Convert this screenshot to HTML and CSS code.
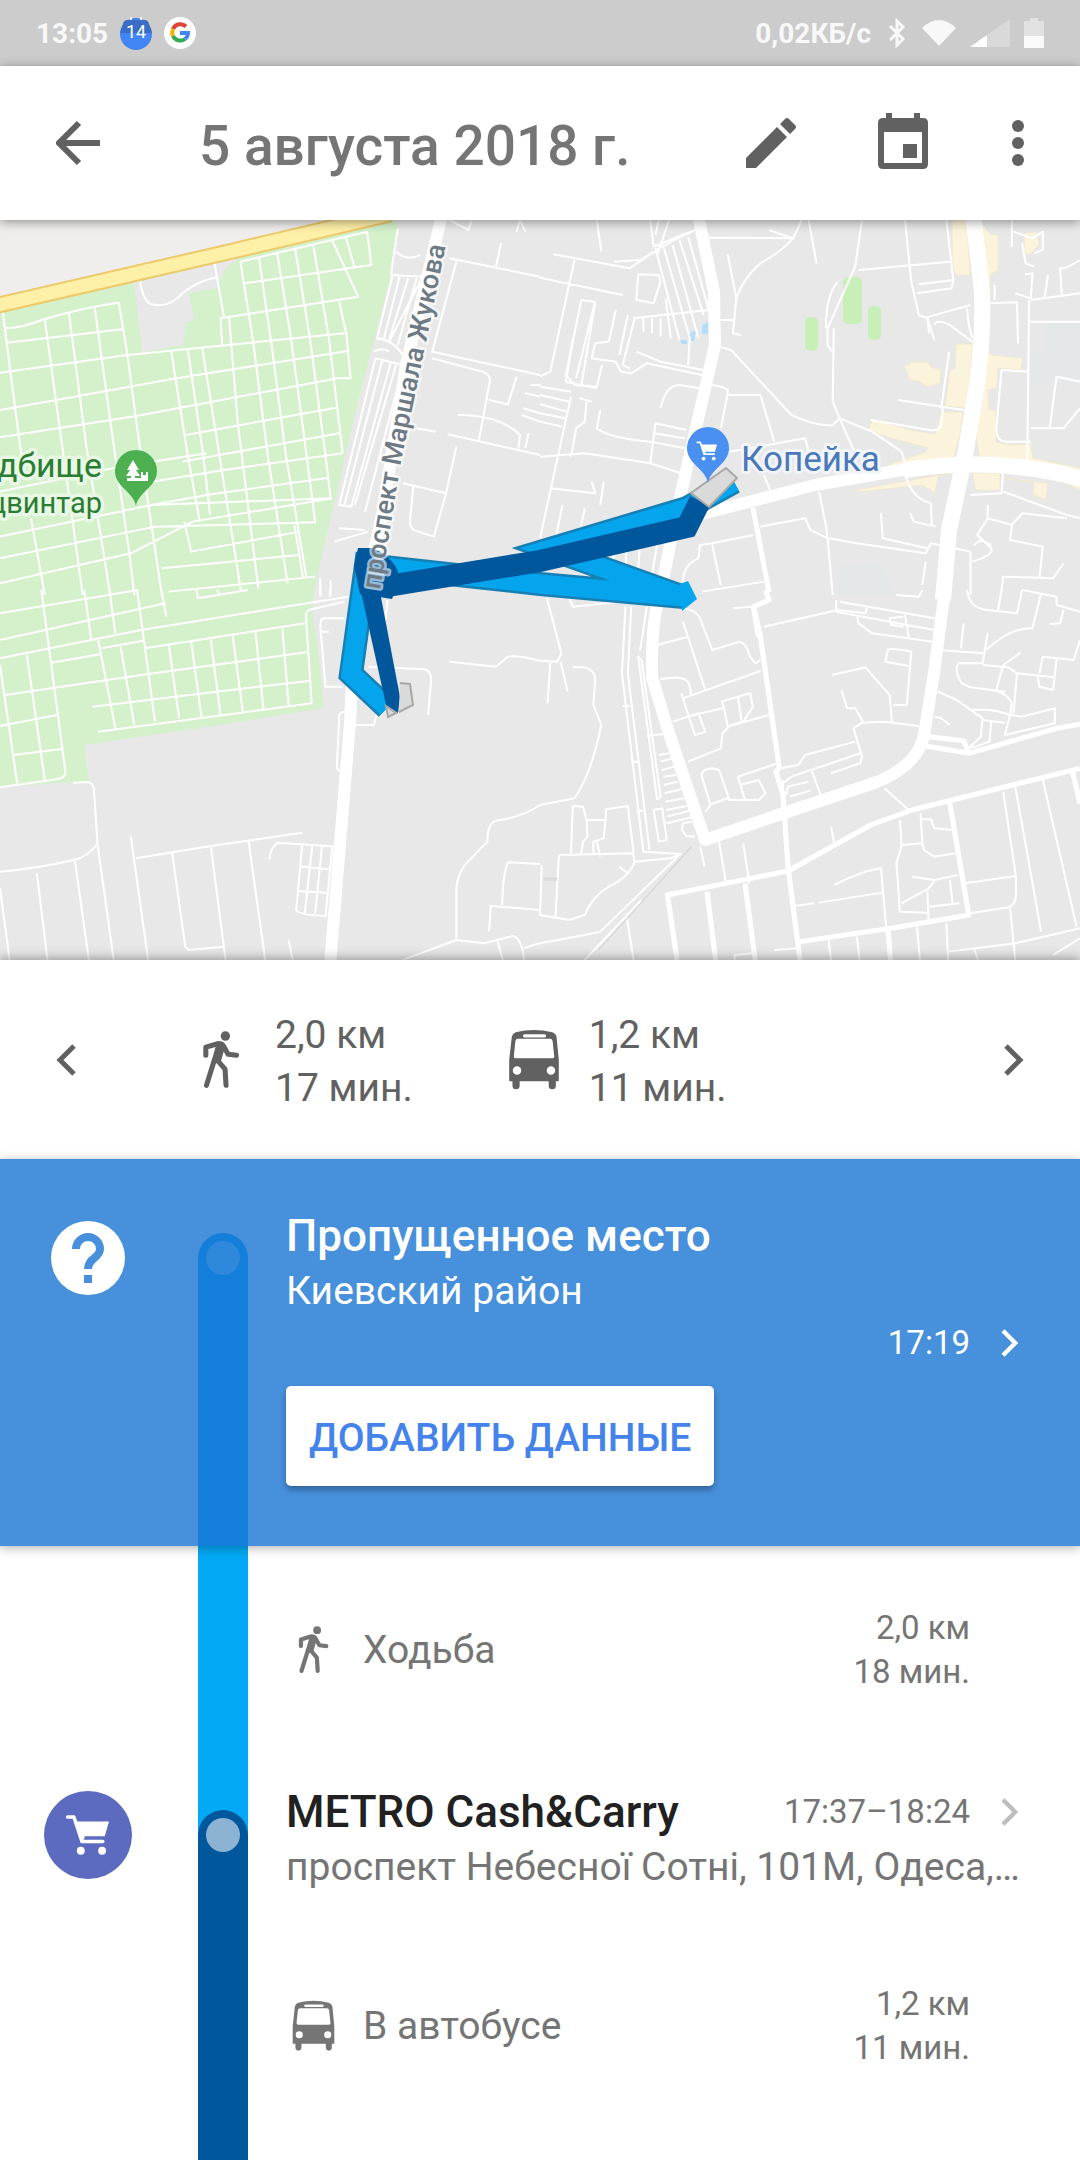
FILE: index.html
```html
<!DOCTYPE html>
<html lang="ru">
<head>
  <meta charset="UTF-8">
  <meta name="viewport" content="width=device-width, initial-scale=1">
  <title>Хронология</title>
  <link rel="stylesheet" href="styles.css">
</head>
<body>

<!-- Shared icons -->
<svg class="sprite" aria-hidden="true">
  <symbol id="walk" viewBox="0 0 110 172">
    <circle cx="68" cy="15" r="14" fill="currentColor"/>
    <g fill="none" stroke="currentColor" stroke-linecap="round" stroke-linejoin="round">
      <path stroke-width="15" d="M10 72V48L48 37M62 44L76 69L101 72M42 84L67 113L70 161M36 84L12 161"/>
      <path stroke-width="27" d="M54 44L43 82"/>
    </g>
  </symbol>
  <symbol id="bus" viewBox="0 0 164 190">
    <path fill="currentColor" fill-rule="evenodd" d="M6 160V95L14 24Q16 14 26 10Q82-4 138 10Q149 14 151 24L158 95V160H149V174Q149 185 138 185Q127 185 127 174V160H38V174Q38 185 27 185Q16 185 16 174V160ZM53 16Q48 16 48 21T53 26H114Q119 26 119 21T114 16ZM33 30Q26 30 25 37L20 84Q20 90 26 90H138Q145 90 144 84L139 37Q138 30 131 30ZM43 127A13 13 0 1 0 17 127A13 13 0 1 0 43 127ZM147 127A13 13 0 1 0 121 127A13 13 0 1 0 147 127Z"/>
  </symbol>
  <symbol id="cart" viewBox="0 0 136 128">
    <path fill="none" stroke="currentColor" stroke-width="11" stroke-linecap="round" stroke-linejoin="round" d="M6 9H25L50 84H113"/>
    <path fill="currentColor" d="M32 23H132L119 68H58L56 78H46Z"/>
    <circle cx="46" cy="112" r="12" fill="currentColor"/>
    <circle cx="111" cy="112" r="12" fill="currentColor"/>
  </symbol>
  <symbol id="right" viewBox="0 0 20 32">
    <path fill="none" stroke="currentColor" stroke-width="5" d="M2 2L16 16L2 30"/>
  </symbol>
</svg>

<div class="app">

  <!-- Status bar -->
  <div class="status">
    <span>13:05</span>
    <svg class="badge" viewBox="0 0 32 34">
      <circle cx="16" cy="18" r="16" fill="#4285f4"/>
      <path d="M3 8Q4 4 7 4H25Q28 4 29 8L32 17H0Z" fill="#3b6dc4"/>
      <path d="M11 1V4M21 1V4" stroke="#eee" stroke-width="2"/>
      <text class="badge-text" x="16" y="22">14</text>
    </svg>
    <svg class="badge" viewBox="0 0 32 34">
      <circle cx="16" cy="17" r="16" fill="#fff"/>
      <g fill="none" stroke-width="4">
        <path stroke="#db4437" d="M22 10.500A8 8 0 0 0 9 13"/>
        <path stroke="#f4b400" d="M9 13A8 8 0 0 0 9 20"/>
        <path stroke="#34a853" d="M9 20A8 8 0 0 0 21 23"/>
        <path stroke="#4285f4" d="M21 23A8 8 0 0 0 24 17H16"/>
      </g>
    </svg>
    <span class="speed">0,02КБ/с</span>
    <svg class="bluetooth" viewBox="0 0 18 30"><path d="M2 8L15 21L9 27V3L15 9L2 22" fill="none" stroke="currentColor" stroke-width="3"/></svg>
    <svg class="wifi" viewBox="0 0 34 26"><path d="M0 8Q17-8 34 8L17 26Z" fill="currentColor"/></svg>
    <svg class="signal" viewBox="0 0 40 28"><path d="M0 28L40 0V28Z" fill="#d9d9d9"/><path d="M0 28L17 16V28Z" fill="#fff"/></svg>
    <svg class="battery" viewBox="0 0 20 30"><path d="M0 3H6V0H14V3H20V30H0Z" fill="#e2e2e2"/><path d="M0 18H20V30H0Z" fill="#fafafa"/></svg>
  </div>

  <!-- App bar -->
  <header class="bar">
    <button class="icon-button" aria-label="Назад">
      <svg class="back" viewBox="0 0 44 46"><path d="M44 23H5M23 3L3 23L23 43" fill="none" stroke="currentColor" stroke-width="6"/></svg>
    </button>
    <h1>5 августа 2018 г.</h1>
    <button class="icon-button" aria-label="Изменить">
      <svg class="pencil" viewBox="0 0 50 50"><path d="M0 40L31 9L41 19L10 50H0ZM34 6L39 1Q41-1 43 1L49 7Q51 9 49 11L44 16Z" fill="currentColor"/></svg>
    </button>
    <button class="icon-button" aria-label="Календарь">
      <svg class="calendar" viewBox="0 0 50 56"><path fill="currentColor" fill-rule="evenodd" d="M8 0H14V5H36V0H42V5H45Q50 5 50 10V51Q50 56 45 56H5Q0 56 0 51V10Q0 5 5 5H8ZM6 19V50H44V19ZM25 31H39V45H25Z"/></svg>
    </button>
    <button class="icon-button" aria-label="Ещё">
      <svg class="more" viewBox="0 0 12 46"><circle cx="6" cy="6" r="6" fill="currentColor"/><circle cx="6" cy="23" r="6" fill="currentColor"/><circle cx="6" cy="40" r="6" fill="currentColor"/></svg>
    </button>
  </header>

  <!-- Map -->
  <div class="map">
    <svg class="map-canvas" viewBox="0 0 1080 740" role="img" aria-label="Карта маршрута">
      <defs>
        <path id="zhukova" d="M380 370L401 242L424 132L450 5"/>
      </defs>

      <!-- Land -->
      <path class="suburb" d="M0 0H380L220 34L0 84Z"/>
      <path class="park" d="M0 84L220 34L380 0H394L398 8L389 62L358 182L315 365L312 390L318 430L324 488L200 508L84 525L89 562H71L0 567Z"/>
      <path class="land" d="M134 63L142 132L183 125L186 102L194 100L189 73L217 68L226 48L240 37L215 42Z"/>
      <g class="field">
        <rect x="843" y="57" width="19" height="47" rx="5"/>
        <rect x="805" y="97" width="13" height="34" rx="5"/>
        <rect x="868" y="86" width="13" height="34" rx="5"/>
      </g>
      <path class="water" d="M702 105L708 102V114H702ZM690 113L696 110L694 121H689ZM680 120H687V124H682Z"/>
      <path class="tint" d="M1045 102H1080V165H1027V132L1045 130ZM840 345L882 342L895 375H838Z"/>
      <path class="shops" d="M952 0H967L970 55H955L952 40ZM980 0L990 14L998 15V50L990 55V75L986 73L982 30ZM1024 13L1037 12L1039 25L1030 35L1024 33ZM956 124H973L967 188L945 186L950 150L955 148ZM904 146L912 142H928L931 147L941 150L940 163L928 167L920 162L910 160ZM986 126L991 135L1023 138L1021 150L998 148L997 168L988 170L989 190H996V222L1010 225L1031 224L1033 238L1080 248V270L1040 252L980 241L976 215ZM941 192H963L960 215L951 249L880 248L925 232L928 228L890 218L868 210L873 199L910 210L935 214ZM856 270L950 253L938 257L935 273L922 265L860 272ZM973 253H1000V270H975ZM1000 258L1048 263L1046 280L1033 275L1034 263Z"/>

      <!-- Side streets, north-west -->
      <g class="street" transform="translate(0 -5) scale(.3444 .3333)">
        <path d="M8 290L30 470L62 720M15 340Q60 340 130 312Q250 275 345 263L370 420L405 690M20 383L355 343M130 312L180 690L215 950L240 1140M200 293L250 690L300 1010L320 1140M275 278L330 690L375 1010L390 1140M0 473L370 420L1000 355M0 585L180 552L500 492L1010 408M0 667L400 602L980 490L1018 490L1005 350M405 690L470 1140M0 830L350 755L600 715M0 965L440 870L960 850M0 1030L450 935L918 922M0 1105L380 1015L560 920L965 850"/>
        <path d="M405 190Q415 260 440 268Q490 280 530 235Q570 200 628 187M622 140L650 305M698 140L1066 50L1078 150L710 205M698 140L735 380L780 740L835 1105M752 128L790 400L830 720L890 1090M805 115L845 370L890 720L915 920M857 102L900 370L945 720L960 850M910 92L955 370L995 715M965 78L1040 245L640 310L645 390M1005 68L1030 160M985 260L1005 355M665 305L690 620L750 1120M497 408L545 720L580 920M545 402L590 720L610 900M587 398L640 740L700 1130M540 660L975 578M530 740L985 655M440 800L650 765L995 715M440 870L600 840L955 788M535 920L555 1010L870 950M470 1060L868 1020M490 1130L915 1085M855 930L880 1090"/>
        <path d="M90 910L130 1140M1155 40L1135 180L1225 185M1150 110Q1180 140 1220 120M1140 180L1095 370L1130 380L1225 190M1160 185L1115 370M1185 190L1130 375M1210 190L1155 390M1085 410Q1110 395 1130 410M1090 430L985 870L1020 875L1135 440M1110 435L1000 870M1150 450L1030 870M1170 455L1060 890M1090 430L1170 450M1100 370Q1150 380 1175 430M985 940L1060 945M970 980L1070 950"/>
        <path d="M1305 15L1360 45L1370 15M1305 130L1568 185M1455 85L1440 155M1325 140L1255 410L1568 480M1255 430L1400 470Q1430 480 1420 510L1390 680M1420 555L1475 568L1500 485M1330 600Q1450 600 1510 660L1505 700M1210 640L1265 650M1300 658L1568 720M1325 695L1295 835L1170 805M1200 815L1190 920Q1190 945 1215 950L1260 965L1295 835M1500 50L1510 15L1525 50M1520 580L1568 595M1525 535L1568 545M1535 655L1525 700M1570 510H1540M1515 600L1568 620M930 1090V1140M960 1095V1140"/>
      </g>

      <!-- Side streets, north-east -->
      <g class="street" transform="translate(540 -5) scale(.3444 .3333)">
        <path d="M165 15L178 110M320 15L330 95L450 45M345 15L335 60M375 15L340 120M215 140L290 135L390 75L450 45M40 118L260 160L360 90M100 135L30 470L0 485M0 188L240 240M285 178L345 180L350 200L330 265L280 255ZM335 100L405 375M360 100L435 370M385 90L460 370M405 75L475 300M430 65L500 320M365 250L380 370M490 68L735 70L760 15M665 45L735 70Q700 110 640 145Q590 190 570 250L560 355L585 360M545 118L570 250M780 15L803 145M935 15L915 155L835 340L835 390L848 410M865 200Q830 240 830 340M925 165L1190 140M1060 15L1078 200L1100 300L1120 308L1250 270M1100 208L1200 195L1195 220L1095 235M1180 15L1200 195M1130 355L1125 310L1145 375M1145 330Q1150 310 1190 330L1255 380"/>
        <path d="M1370 15V95M1375 50L1430 70L1460 50V105L1435 115M1400 85L1410 145L1435 155M1408 178L1430 175L1425 250L1380 235M1475 180L1465 250M1568 135Q1520 165 1510 160L1515 240M1295 265L1385 262L1388 385M1320 210V255M1425 255L1568 235M1420 255L1415 740M1420 320H1568M1340 465L1420 470M1340 465L1325 640Q1325 680 1355 680H1425M1500 485L1568 500M1500 485L1480 640M1568 580L1520 640H1425M1240 280L1245 330L1255 370"/>
        <path d="M520 315H560M520 395L555 405L730 600Q800 635 850 630L870 610L850 560L853 340M870 610L965 650L1050 710L1060 745M870 610L910 705M1188 410L1165 580M1040 555L1230 585M1170 580L1165 630Q1160 650 1130 645L960 615M545 520V540L640 540L680 680M495 510Q550 515 545 535L525 640M550 710L770 670L780 710M650 780L670 830M120 255L75 480L100 510L165 515L180 450M160 265L120 510M120 255L160 260L105 490M220 285L200 380L160 385L150 430L220 440L235 470L265 475L310 445L470 480M255 300L230 420M275 310L240 450L262 460M270 310L490 285M300 310V350M325 310V355M350 310V365M280 410L350 440L475 465M435 370L430 450M350 580Q365 510 405 510L465 520"/>
        <path d="M95 375L75 500L165 520M0 515L90 530M0 540L85 560M0 568L80 590M0 595L75 610M0 620L65 635M90 545L0 970M115 550L150 560M135 560L130 620L105 640L90 725M175 585L165 640Q200 670 320 680L420 700M335 625L425 645M330 655L420 670M335 625L320 745L410 775M0 725L130 715L320 745M150 800L160 835L30 820M185 800L175 870M65 870L30 1050M130 880L105 1000M220 1010L180 1100M250 1000V1110M290 990L280 1140M345 960L320 1110"/>
        <path d="M640 935L770 910L785 945L835 970L830 930L810 830M835 970L850 1140M620 960L500 985L465 990L460 1030Q415 1050 415 1100M500 990L525 1110M470 1130L650 1100M840 970L920 985L1120 1015L1135 985L1250 1010V1140M1075 895L1085 920L1150 935M990 895L995 970L1125 1000M1060 780Q1080 850 1135 865L1138 930M1120 1040L1110 1110M1250 840L1340 835L1345 770M1345 830L1530 900L1568 910M1300 870V910L1370 930L1400 895L1530 910M1300 910L1270 960L1310 1000Q1320 1020 1255 1040M1370 930L1365 975L1460 995L1450 1090M1340 1130L1345 1085L1490 1090L1520 1045M1260 990L1280 975L1310 990"/>
      </g>

      <!-- Side streets, south-west -->
      <g class="street" transform="translate(0 370) scale(.3444 .3333)">
        <path d="M0 70L400 0M0 150L480 40M0 205L410 120L1010 20M15 315L410 255L890 187M0 408L165 375M268 350L900 272M285 425L905 340M40 495L180 477M0 592L165 568Q195 560 190 545L120 0M78 195L130 570M0 225L50 580M150 218L290 193M295 175L415 152M245 0L265 150M285 150L335 415M318 0L335 130M350 170L390 405M398 0L450 395M468 0L483 80M420 175L885 100M490 165L520 385M555 155L585 380M612 148L640 375M675 135L705 365M742 128L765 358M820 115L838 345M570 0L575 25L720 0M630 0L640 15"/>
        <path d="M212 578L255 576Q272 580 273 600L283 760L330 1110M0 845Q110 835 215 810Q255 800 283 762M0 895L28 1110M107 850L138 1110M218 815L258 1110M380 740L430 1110M395 805L612 768L878 728M500 790L538 1070L548 1080L650 1070M612 768L655 1110M722 755L770 1110M838 1050L850 1110M782 808Q785 770 808 758L980 770M878 760L860 960Q865 975 950 978M907 765L885 970M935 768L915 970M965 770L945 980M875 830L955 838M868 903L950 908"/>
        <path d="M905 340L888 75Q890 60 905 58L1000 35M930 0V20M958 0V20M1000 85H940Q930 85 930 110L945 290H995M935 125H955M1000 365Q985 365 985 380L978 535L995 550M1030 405H1085L1095 370M1070 230L1235 238Q1253 245 1252 270L1243 375M1125 30L1120 90M1305 215L1440 230L1475 200Q1500 195 1568 212M1568 645Q1520 680 1440 692Q1415 700 1415 755L1345 830Q1325 870 1325 900V1050M1170 1110L1325 1050L1405 1060L1490 1038Q1515 1045 1522 1110M1445 1055L1460 1110M1520 1075L1568 1060M1568 822L1475 817Q1460 850 1458 945M1568 960L1425 948L1420 1025"/>
      </g>

      <!-- Side streets, south-east -->
      <g class="street" transform="translate(540 370) scale(.3444 .3333)">
        <path d="M20 25L62 190L50 215L0 212M30 215L22 340M60 215L80 305M95 232Q160 225 160 270L155 345L178 405Q150 550 100 625L0 645M85 25L95 50L230 35M248 50L238 250L300 785L410 792L380 805L275 815M265 50L255 250L318 780M285 200L340 628L350 620L295 210ZM310 50L295 155L290 180M240 348H262M265 515H285M280 662H300M310 437L360 432M330 660L345 755L368 750L355 655ZM345 495L375 490M350 515L385 505M355 540L390 530M358 560L395 555M360 585L400 575M362 610L410 598M365 635L418 625M367 660L425 648M370 680L435 662M368 700L440 682M440 695L415 700L412 720L425 738L450 740"/>
        <path d="M90 790L95 648L125 650L135 690L190 690L192 658L255 648L272 790M120 790L125 755L138 740L135 690M190 690L185 745L155 755V790M165 755L175 800M55 795L270 790L275 815Q260 860 200 890Q150 920 130 975L85 990L0 975L5 825M55 795L45 980M230 830L255 850M0 1060L130 1035L175 1025L400 800M130 1110L295 930M250 970L272 1110M365 700L360 690M465 770L478 830M520 755L540 880M590 760L608 880M845 710L855 765M1000 595L1070 660"/>
        <path d="M415 55Q460 60 470 100L500 180L580 155Q600 160 610 200L625 220L640 210M415 95L480 300M340 165L425 142M350 268Q430 250 435 290L440 320M410 310L450 435L480 425L460 370L385 395M415 325L640 243M425 380L530 355M525 335L610 310L618 350L590 395L545 408L530 335M575 320L585 395M430 515L525 475L530 430L550 408L665 375M480 665L495 645L470 560Q465 540 500 535L520 540L550 630L635 630L655 610L635 570L580 585M595 630L575 560L690 520M545 625L490 645M560 55L615 50L630 140M650 110L865 60M860 30L860 65L1145 120M870 35L1145 85M865 60L945 70L950 50M920 75L925 100L965 130L1140 155M1060 75L1070 140M1055 80L1015 85L1020 105L1055 110M1035 15L1100 20L1110 0M1010 180Q1015 172 1078 185L1065 345H1025M1010 180L1003 215L1070 228M848 255L945 232L1015 315L1022 395M875 300L892 355L915 355L938 395M1100 408L1000 395L935 398L910 415L935 500L930 520L845 550M700 535L750 525L770 495L915 455M705 580L730 560L930 490M715 615L720 590L780 575M725 620L785 602M790 545L815 615M705 600V570"/>
        <path d="M1155 180L1290 190L1300 130M1230 100L1222 175M1290 190L1285 220H1215Q1200 240 1225 280L1250 292L1350 305M1345 225L1395 188M1345 225L1325 300M1285 225L1360 232L1385 250L1375 370M1385 250L1490 262M1240 0Q1245 55 1300 60L1385 70L1400 0M1340 0L1330 60M1295 180Q1370 110 1430 115L1455 10M1400 0L1500 20L1500 45L1568 65M1520 60L1510 100L1480 102M1550 210L1568 150M1550 210L1460 200L1450 250M1500 205L1490 300L1450 290L1445 258M1155 305L1210 330L1285 385L1280 440L1245 475M1250 360Q1320 355 1365 375L1350 435L1495 400V355L1400 380L1365 375L1370 340Q1360 315 1330 305M1285 390L1350 398M1310 395L1305 455L1250 475M1145 380L1165 385L1190 405"/>
        <path d="M1045 690L1050 765L1035 820L1045 965L1125 968M1050 765L1110 760L1115 780L1145 800L1205 790M1105 670L1110 760M1110 688H1135L1145 715L1195 720M1080 860L1145 870L1215 855M1145 870Q1130 900 1115 903L1050 940M1125 905L1128 990M1190 870L1198 940M1130 950L1218 940M855 885Q930 845 990 835L1005 1010M740 948L795 940M810 938L995 908M680 1080L750 1075M565 1110V1095L615 1090M838 1050L845 1110M920 1040L928 1110M1095 1010L1103 1110M1180 1000L1185 1110M1185 1085L1380 1060L1568 1015M1250 970L1360 952Q1385 945 1382 900V860L1345 605M1235 880L1380 858M1365 955L1380 1110M1380 590L1455 1025M1460 570L1558 1010M1260 1075L1272 1110M1490 1095L1568 1045"/>
        <path class="avenue" d="M655 0L665 30L620 50L640 140L695 535L685 545L705 610L710 680L720 830L755 1110M398 1110L370 915L720 843L960 705L1080 660L1568 535M485 905L510 1110M595 880L625 1110M755 1055L1020 1015L1245 975L1190 640M1010 1015L1018 1110M1130 440L1230 452L1245 488M1120 468L1245 490L1500 415L1568 403M1545 540L1568 640"/>
        <path class="rail" d="M170 1080L440 770M10 865H50M10 870H50"/>
      </g>

      <!-- Main roads -->
      <path class="avenue-main" d="M753 288L769 372"/>
      <path class="highway-edge" d="M-10 87L220 34L390-6"/>
      <path class="highway" d="M-10 87L220 34L390-6"/>
      <path class="road" d="M442-5L406 145L382 295L354 420L350 503L330 745"/>
      <path class="road" d="M698-5L714 72L715 125L695 212L676 295L660 375Q651 400 652 457L667 507L705 620L781 594L877 562Q918 545 924 515L934 453L945 370"/>
      <path class="road wide" d="M943 380L949 310L965 235L977 165Q985 100 981 62L973-5"/>
      <path class="road" d="M690 297L815 265L919 247"/>
      <path class="road wide" d="M905 250Q1000 235 1090 261"/>

      <!-- Route -->
      <path class="walk-edge" d="M734 262L687 288L550 329L684 377L540 364L366 345L351 454L387 488"/>
      <path class="walk-line" d="M734 262L687 288L550 329L684 377L540 364L366 345L351 454L387 488"/>
      <path class="walk-tip" d="M680 364L688 361L697 379L682 391Z"/>
      <path class="ride-line" d="M700 281L687 307L540 341L388 366"/>
      <path class="ride-blob" d="M358 328H372Q397 338 400 360L392 379L360 374L354 346Z"/>
      <path class="ride-leg" d="M361 372H380L400 477L398 493L386 485Z"/>
      <path class="stop" d="M709 287L691 273L726 248L737 258Z"/>
      <path class="stop" d="M400 463L410 464L413 485L399 492M386 486L396 493L388 497Z"/>

      <!-- Labels -->
      <text class="street-label"><textPath href="#zhukova">проспект Маршала Жукова</textPath></text>
      <text class="park-label" x="102" y="257">дбище</text>
      <text class="park-label small" x="102" y="293">цвинтар</text>
      <text class="shop-label" x="741" y="251">Копейка</text>

      <!-- Pins -->
      <path fill="#4caf50" d="M136 286C134 272 115 267 115 251A21 21 0 0 1 157 251C157 267 138 272 136 286Z"/>
      <path fill="#fff" d="M133 240L139 250H136L140 256H135V258H141V252H143V255H146V252H148V261H127V258H131V256H126L130 250H127Z"/>
      <path fill="#4a90f0" d="M708 263C706 249 687 244 687 228A21 21 0 0 1 729 228C729 244 710 249 708 263Z"/>
      <use class="pin-cart" href="#cart" x="696" y="221" width="22" height="20"/>
    </svg>
  </div>

  <!-- Day summary -->
  <section class="summary">
    <button class="icon-button" aria-label="Предыдущий день"><svg class="chevron flip"><use href="#right"/></svg></button>
    <div class="totals">
      <div class="total">
        <svg class="total-walk"><use href="#walk"/></svg>
        <p>2,0 км<br>17 мин.</p>
      </div>
      <div class="total">
        <svg class="total-bus"><use href="#bus"/></svg>
        <p>1,2 км<br>11 мин.</p>
      </div>
    </div>
    <button class="icon-button" aria-label="Следующий день"><svg class="chevron"><use href="#right"/></svg></button>
  </section>

  <!-- Timeline -->
  <main class="timeline">
    <section class="row missed">
      <div class="place">
        <svg class="question" viewBox="0 0 74 74">
          <circle cx="37" cy="37" r="37" fill="#fff"/>
          <path d="M25 28A12 12 0 0 1 49 28C49 37 37 37 37 48" fill="none" stroke="#4790dc" stroke-width="8"/>
          <path d="M33 54H41V62H33Z" fill="#4790dc"/>
        </svg>
      </div>
      <div class="rail-line"><div class="track"><span class="dot"></span></div></div>
      <div class="content">
        <h2>Пропущенное место</h2>
        <p class="address">Киевский район</p>
        <div class="when"><span>17:19</span><svg class="chevron"><use href="#right"/></svg></div>
        <button class="add">ДОБАВИТЬ ДАННЫЕ</button>
      </div>
    </section>

    <section class="row move walking">
      <div class="place"></div>
      <div class="rail-line"></div>
      <div class="content">
        <span class="mode"><svg class="mode-walk"><use href="#walk"/></svg></span>
        <span class="mode-name">Ходьба</span>
        <p class="amount">2,0 км<br>18 мин.</p>
      </div>
    </section>

    <section class="row visit">
      <div class="place">
        <div class="shop"><svg class="shop-cart"><use href="#cart"/></svg></div>
      </div>
      <div class="rail-line"><div class="track"><span class="dot"></span></div></div>
      <div class="content">
        <div class="heading">
          <h2>METRO Cash&amp;Carry</h2>
          <div class="when"><span>17:37–18:24</span><svg class="chevron"><use href="#right"/></svg></div>
        </div>
        <p class="address">проспект Небесної Сотні, 101М, Одеса, Одеська область</p>
      </div>
    </section>

    <section class="row move riding">
      <div class="place"></div>
      <div class="rail-line"></div>
      <div class="content">
        <span class="mode"><svg class="mode-bus"><use href="#bus"/></svg></span>
        <span class="mode-name">В автобусе</span>
        <p class="amount">1,2 км<br>11 мин.</p>
      </div>
    </section>
  </main>

</div>

</body>
</html>
```
FILE: styles.css
```css
* {
  box-sizing: border-box;
}

body {
  margin: 0;
  font-family: Roboto, "Noto Sans", sans-serif;
  color: #757575;
  background: #fff;
}

h1, h2, p {
  margin: 0;
  font-weight: 500;
}

p {
  font-weight: 400;
}

button {
  padding: 0;
  border: none;
  background: none;
  color: inherit;
  font: inherit;
  cursor: pointer;
}

svg {
  display: block;
  flex: none;
}

.sprite {
  position: absolute;
  width: 0;
  height: 0;
}

.app {
  display: flex;
  flex-direction: column;
  min-height: 100vh;
}

/* Status bar */
.status {
  display: flex;
  align-items: center;
  height: 66px;
  padding: 0 36px;
  background: #ccc;
  color: #f8f8f8;
  font-size: 28px;
  font-weight: 700;
}

.badge {
  width: 32px;
  height: 34px;
  margin-left: 12px;
}

.badge-text {
  font-size: 18px;
  font-weight: 400;
  fill: #fff;
  text-anchor: middle;
}

.speed {
  margin-left: auto;
}

.bluetooth {
  width: 18px;
  height: 30px;
  margin-left: 17px;
}

.wifi {
  width: 34px;
  height: 26px;
  margin-left: 16px;
}

.signal {
  width: 40px;
  height: 28px;
  margin-left: 14px;
}

.battery {
  width: 20px;
  height: 30px;
  margin-left: 14px;
}

/* App bar */
.bar {
  display: flex;
  align-items: center;
  height: 154px;
  padding: 0 56px;
  background: #fff;
  box-shadow: 0 2px 10px rgba(0, 0, 0, 0.4);
  z-index: 1;
}

.icon-button {
  display: flex;
  color: #616161;
}

.back {
  width: 44px;
  height: 46px;
}

.bar h1 {
  flex: 1;
  padding: 6px 0 0 99px;
  font-size: 55px;
}

.pencil {
  width: 50px;
  height: 50px;
}

.calendar {
  width: 50px;
  height: 56px;
  margin: 0 84px 4px 82px;
}

.more {
  width: 12px;
  height: 46px;
}

/* Map */
.map {
  background: #e8e8e8;
}

.map-canvas {
  width: 100%;
  height: auto;
}

.land {
  fill: #e8e8e8;
}

.suburb {
  fill: #f0eeec;
}

.park {
  fill: #d4f1cb;
}

.field {
  fill: #c8efb8;
}

.water {
  fill: #b5dcf8;
}

.tint {
  fill: #e5e8e9;
}

.shops {
  fill: #fbf3dc;
  stroke: #efe8d4;
}

.street {
  fill: none;
  stroke: #fff;
  stroke-width: 6;
  stroke-linejoin: round;
}

.avenue {
  stroke-width: 15;
}

.rail {
  stroke: #d2d2d2;
  stroke-width: 3;
}

.avenue-main {
  fill: none;
  stroke: #fff;
  stroke-width: 5;
}

.highway-edge, .highway, .road {
  fill: none;
  stroke-linejoin: round;
}

.highway-edge {
  stroke: #ecca6c;
  stroke-width: 17;
}

.highway {
  stroke: #fff0a8;
  stroke-width: 13;
}

.road {
  stroke: #fff;
  stroke-width: 12;
}

.wide {
  stroke-width: 16;
}

.walk-edge, .walk-line, .ride-line {
  fill: none;
}

.walk-edge {
  stroke: #167fb3;
  stroke-width: 24;
}

.walk-line {
  stroke: #05a5ee;
  stroke-width: 19;
}

.walk-tip {
  fill: #05a5ee;
}

.ride-line {
  stroke: #01579b;
  stroke-width: 22;
}

.ride-blob, .ride-leg {
  fill: #01579b;
}

.stop {
  fill: #dadada;
  stroke: #a8a8a8;
  stroke-width: 2;
}

.street-label, .park-label, .shop-label {
  paint-order: stroke;
  stroke-linejoin: round;
}

.street-label {
  font-size: 27px;
  font-weight: 500;
  fill: #6e7a84;
  stroke: rgba(255, 255, 255, 0.6);
  stroke-width: 5;
}

.park-label {
  font-size: 34px;
  fill: #2a7d32;
  stroke: #e9f8e4;
  stroke-width: 7;
  text-anchor: end;
}

.park-label.small {
  font-size: 29px;
}

.shop-label {
  font-size: 35px;
  fill: #4a78b8;
  stroke: #f1f5f9;
  stroke-width: 6;
}

.pin-cart {
  color: #fff;
}

/* Day summary */
.summary {
  display: flex;
  align-items: center;
  height: 199px;
  padding: 0 56px;
  background: #fff;
  box-shadow: 0 -2px 10px rgba(0, 0, 0, 0.35);
  color: #616161;
  font-size: 39px;
  line-height: 53px;
  z-index: 1;
}

.chevron {
  width: 20px;
  height: 32px;
}

.flip {
  transform: scaleX(-1);
}

.totals {
  display: flex;
  flex: 1;
  gap: 94px;
  padding-left: 126px;
}

.total {
  display: flex;
  align-items: center;
}

.total p {
  padding-top: 4px;
}

.total-walk {
  width: 38px;
  height: 58px;
  margin-right: 35px;
}

.total-bus {
  width: 54px;
  height: 62px;
  margin-right: 28px;
}

/* Timeline */
.timeline {
  display: flex;
  flex: 1;
  flex-direction: column;
}

.row {
  display: grid;
  grid-template-columns: 176px 50px 1fr;
  column-gap: 22px;
}

.place {
  display: flex;
  align-items: flex-start;
  justify-content: center;
}

.content {
  min-width: 0;
  padding: 0 57px 0 16px;
}

.track {
  height: 100%;
  padding: 8px;
  border-radius: 25px 25px 0 0;
}

.dot {
  display: block;
  width: 34px;
  height: 34px;
  border-radius: 50%;
  background: rgba(255, 255, 255, 0.55);
}

.content h2 {
  font-size: 44px;
  line-height: 54px;
}

.address {
  overflow: hidden;
  font-size: 39px;
  line-height: 56px;
  white-space: nowrap;
  text-overflow: ellipsis;
}

.when {
  display: flex;
  align-items: center;
  justify-content: flex-end;
  gap: 31px;
  font-size: 33px;
  line-height: 48px;
}

.when .chevron {
  width: 18px;
  height: 28px;
  margin-right: 4px;
  color: #bdbdbd;
}

.missed {
  height: 387px;
  background: #4790dc;
  box-shadow: 0 2px 10px rgba(0, 0, 0, 0.3);
  color: #fff;
  z-index: 1;
}

.missed .place {
  padding-top: 62px;
}

.missed .rail-line {
  padding-top: 74px;
}

.missed .track {
  background: #147fda;
}

.missed .dot {
  background: #2e88dc;
}

.missed .content {
  padding-top: 50px;
}

.missed .when .chevron {
  color: #fff;
}

.question {
  width: 74px;
  height: 74px;
}

.add {
  height: 100px;
  margin-top: 19px;
  padding: 4px 23px 0;
  border-radius: 5px;
  background: #fff;
  box-shadow: 0 4px 6px rgba(0, 0, 0, 0.3);
  color: #4483ec;
  font-size: 39px;
  font-weight: 500;
}

.move .content {
  display: flex;
  align-items: center;
}

.mode {
  width: 54px;
  display: flex;
  justify-content: center;
}

.mode-name {
  flex: 1;
  padding-left: 23px;
  font-size: 39px;
}

.mode-walk {
  width: 31px;
  height: 48px;
}

.mode-bus {
  width: 45px;
  height: 52px;
}

.amount {
  padding-right: 53px;
  font-size: 33px;
  line-height: 44px;
  text-align: right;
}

.walking {
  height: 208px;
}

.walking .rail-line, .visit .rail-line {
  background: #03a9f4;
}

.visit .rail-line {
  padding-top: 56px;
}

.visit .track, .riding .rail-line {
  background: #01579b;
}

.visit {
  height: 168px;
}

.visit .place {
  padding-top: 37px;
}

.visit .content {
  padding-top: 31px;
}

.heading {
  display: flex;
  align-items: center;
  justify-content: space-between;
}

.heading h2 {
  color: #212121;
}

.shop {
  display: flex;
  align-items: center;
  justify-content: center;
  width: 88px;
  height: 88px;
  border-radius: 50%;
  background: #5c6bc0;
  color: #fff;
}

.shop-cart {
  width: 46px;
  height: 42px;
}

.riding {
  flex: 1;
}

.riding .content {
  height: 208px;
}
```
